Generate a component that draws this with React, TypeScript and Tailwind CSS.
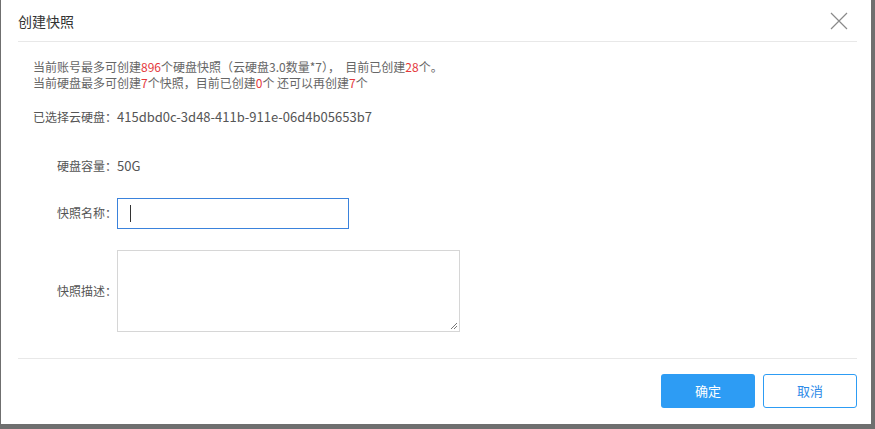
import React from "react";

const font = { fontFamily: '"Noto Sans CJK SC", "Noto Sans", sans-serif' };

export default function App() {
  return (
    <div className="w-[875px] h-[429px] bg-[#6f6f6f] pl-px pr-[4px] pb-[5px]" style={font}>
      <div className="w-full h-full bg-white flex flex-col">
        <div className="h-[42px] ml-[17px] mr-[14px] border-b border-[#e8e8e8] flex items-center justify-between">
          <span className="text-[14px] text-[#333] leading-none">创建快照</span>
          <svg width="20" height="20" viewBox="0 0 20 20" className="mr-[8px]">
            <path d="M2 2 L18 18 M18 2 L2 18" stroke="#8a8a8a" strokeWidth="1.2" fill="none" />
          </svg>
        </div>
        <div className="flex-1 px-[32px] pt-[17px] text-[#666]">
          <div className="text-[12px] leading-[16px]">
            <div>
              当前账号最多可创建<span className="text-[#e4393c]">896</span>个硬盘快照（云硬盘3.0数量*7），&nbsp; 目前已创建<span className="text-[#e4393c]">28</span>个。
            </div>
            <div>
              当前硬盘最多可创建<span className="text-[#e4393c]">7</span>个快照，目前已创建<span className="text-[#e4393c]">0</span>个 还可以再创建<span className="text-[#e4393c]">7</span>个
            </div>
          </div>
          <div className="mt-[17px] flex items-center leading-[18px] text-[#555]">
            <span className="text-[12px] w-[84px]">已选择云硬盘：</span>
            <span className="text-[13px]">415dbd0c-3d48-411b-911e-06d4b05653b7</span>
          </div>
          <div className="mt-[30px] flex items-center text-[#555]">
            <span className="w-[84px] text-right text-[12px]">硬盘容量：</span>
            <span className="text-[13px]">50G</span>
          </div>
          <div className="mt-[22px] flex items-center text-[#555]">
            <span className="w-[84px] text-right text-[12px]">快照名称：</span>
            <div className="w-[232px] h-[31px] border border-[#3a82dc] flex items-center pl-[12px]">
              <div className="w-px h-[17px] bg-[#333]" />
            </div>
          </div>
          <div className="mt-[21px] flex items-center text-[#555]">
            <span className="w-[84px] text-right text-[12px]">快照描述：</span>
            <div className="w-[343px] h-[82px] border border-[#d6d6d6] relative">
              <svg width="8" height="8" viewBox="0 0 8 8" className="absolute right-[1px] bottom-[1px]">
                <path d="M7 1 L1 7 M7 4 L4 7" stroke="#777" strokeWidth="1" fill="none" />
              </svg>
            </div>
          </div>
        </div>
        <div className="ml-[17px] mr-[14px] border-t border-[#e8e8e8] h-[66px] flex items-center justify-end gap-[8px] pb-[1px]">
          <button className="w-[94px] h-[34px] rounded-[3px] bg-[#2d9cf4] text-white text-[13px]">确定</button>
          <button className="w-[94px] h-[34px] rounded-[3px] border border-[#2d9cf4] text-[#2d8ae8] text-[13px] bg-white">取消</button>
        </div>
      </div>
    </div>
  );
}
